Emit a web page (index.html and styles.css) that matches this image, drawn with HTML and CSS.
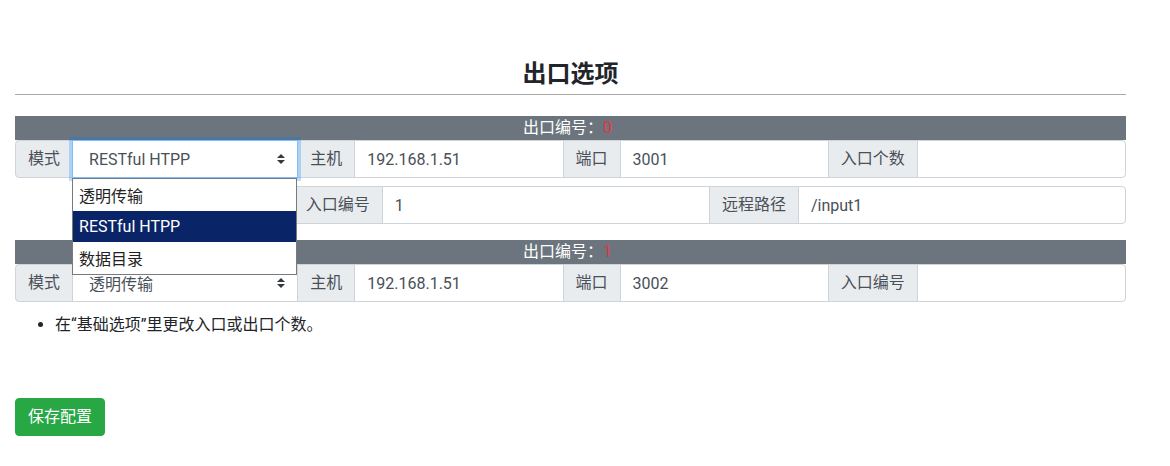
FILE: index.html
```html
<!DOCTYPE html>
<html lang="zh-CN">
<head>
<meta charset="utf-8">
<title>出口选项</title>
<link rel="stylesheet" href="styles.css">
</head>
<body>
<main class="page">
  <h1 class="title">出口选项</h1>
  <hr class="rule">

  <section class="output">
    <div class="bar">出口编号：<span class="num">0</span></div>
    <div class="group">
      <span class="label">模式</span>
      <div class="select focused">
        <span class="select-text">RESTful HTPP</span>
        <svg class="arrows" width="8" height="10" viewBox="0 0 4 5"><path d="M2 0L0 2h4zm0 5L0 3h4z" fill="#343a40"/></svg>
        <ul class="dropdown">
          <li>透明传输</li>
          <li class="active">RESTful HTPP</li>
          <li>数据目录</li>
        </ul>
      </div>
      <span class="label">主机</span>
      <div class="input">192.168.1.51</div>
      <span class="label">端口</span>
      <div class="input">3001</div>
      <span class="label">入口个数</span>
      <div class="input"></div>
    </div>
    <div class="group offset">
      <span class="label">入口编号</span>
      <div class="input">1</div>
      <span class="label">远程路径</span>
      <div class="input">/input1</div>
    </div>
  </section>

  <section class="output second">
    <div class="bar">出口编号：<span class="num">1</span></div>
    <div class="group">
      <span class="label">模式</span>
      <div class="select">
        <span class="select-text">透明传输</span>
        <svg class="arrows" width="8" height="10" viewBox="0 0 4 5"><path d="M2 0L0 2h4zm0 5L0 3h4z" fill="#343a40"/></svg>
      </div>
      <span class="label">主机</span>
      <div class="input">192.168.1.51</div>
      <span class="label">端口</span>
      <div class="input">3002</div>
      <span class="label">入口编号</span>
      <div class="input"></div>
    </div>
  </section>

  <ul class="notes">
    <li>在“基础选项”里更改入口或出口个数。</li>
  </ul>

  <button class="save" type="button">保存配置</button>
</main>
</body>
</html>
```

FILE: styles.css
```css
* { box-sizing: border-box; }

body {
  margin: 0;
  background: #fff;
  color: #212529;
  font-family: Roboto, "Noto Sans", "Noto Sans CJK SC", sans-serif;
  font-size: 16px;
}

.page {
  width: 1111px;
  margin-left: 15px;
  padding-top: 60px;
}

.title {
  margin: 0 0 5px;
  text-align: center;
  font-size: 24px;
  line-height: 29px;
  font-weight: 700;
  color: #212529;
}

.rule {
  margin: 0 0 21px;
  border: 0;
  border-top: 1px solid #aaaaaa;
  height: 0;
}

.second { margin-top: 16px; }

.bar {
  height: 24px;
  line-height: 24px;
  background: #6c757d;
  color: #fff;
  text-align: center;
  font-size: 16px;
  padding-right: 6px;
}

.num { color: #e8343f; }

.group {
  display: flex;
  height: 38px;
}

.group.offset {
  margin-top: 8px;
  margin-left: 25%;
}

.label {
  display: flex;
  align-items: center;
  padding: 0 12px;
  background: #e9ecef;
  border: 1px solid #ced4da;
  color: #495057;
  line-height: 24px;
  white-space: nowrap;
  margin-right: -1px;
}

.group > :first-child { border-radius: 4px 0 0 4px; }
.group > :last-child { border-radius: 0 4px 4px 0; }

.input {
  flex: 1 1 auto;
  width: 1%;
  display: flex;
  align-items: center;
  padding: 0 12px;
  border: 1px solid #ced4da;
  color: #495057;
  background: #fff;
  margin-right: -1px;
}

.group > .input:last-child { margin-right: 0; }

.select {
  position: relative;
  flex: 1 1 auto;
  width: 1%;
  display: flex;
  align-items: center;
  justify-content: space-between;
  padding: 0 25px 0 16px;
  border: 1px solid #ced4da;
  background: #fff;
  color: #495057;
  margin-right: -1px;
}

.select.focused {
  border-color: #80bdff;
  box-shadow: 0 0 0 3px rgba(0, 123, 255, 0.25);
  z-index: 2;
}

.arrows {
  flex: none;
  margin-right: -13px;
}

.dropdown {
  position: absolute;
  left: -1px;
  top: 37px;
  width: 225px;
  height: 97px;
  margin: 0;
  padding: 0;
  list-style: none;
  display: flex;
  flex-direction: column;
  background: #fff;
  border: 1px solid #7a7a7a;
  z-index: 5;
}

.dropdown li {
  flex: 1;
  display: flex;
  align-items: center;
  padding: 0 6px;
  color: #222;
  font-size: 16px;
}

.dropdown li.active {
  background: #0a2468;
  color: #fff;
}

.notes {
  margin: 11px 0 0;
  padding-left: 40px;
  font-size: 16px;
  line-height: 24px;
  color: #212529;
}

.save {
  display: block;
  margin-top: 61px;
  height: 38px;
  padding: 0 12px;
  border: 1px solid #28a745;
  border-radius: 4px;
  background: #28a745;
  color: #fff;
  font-family: inherit;
  font-size: 16px;
  line-height: 24px;
}
```
